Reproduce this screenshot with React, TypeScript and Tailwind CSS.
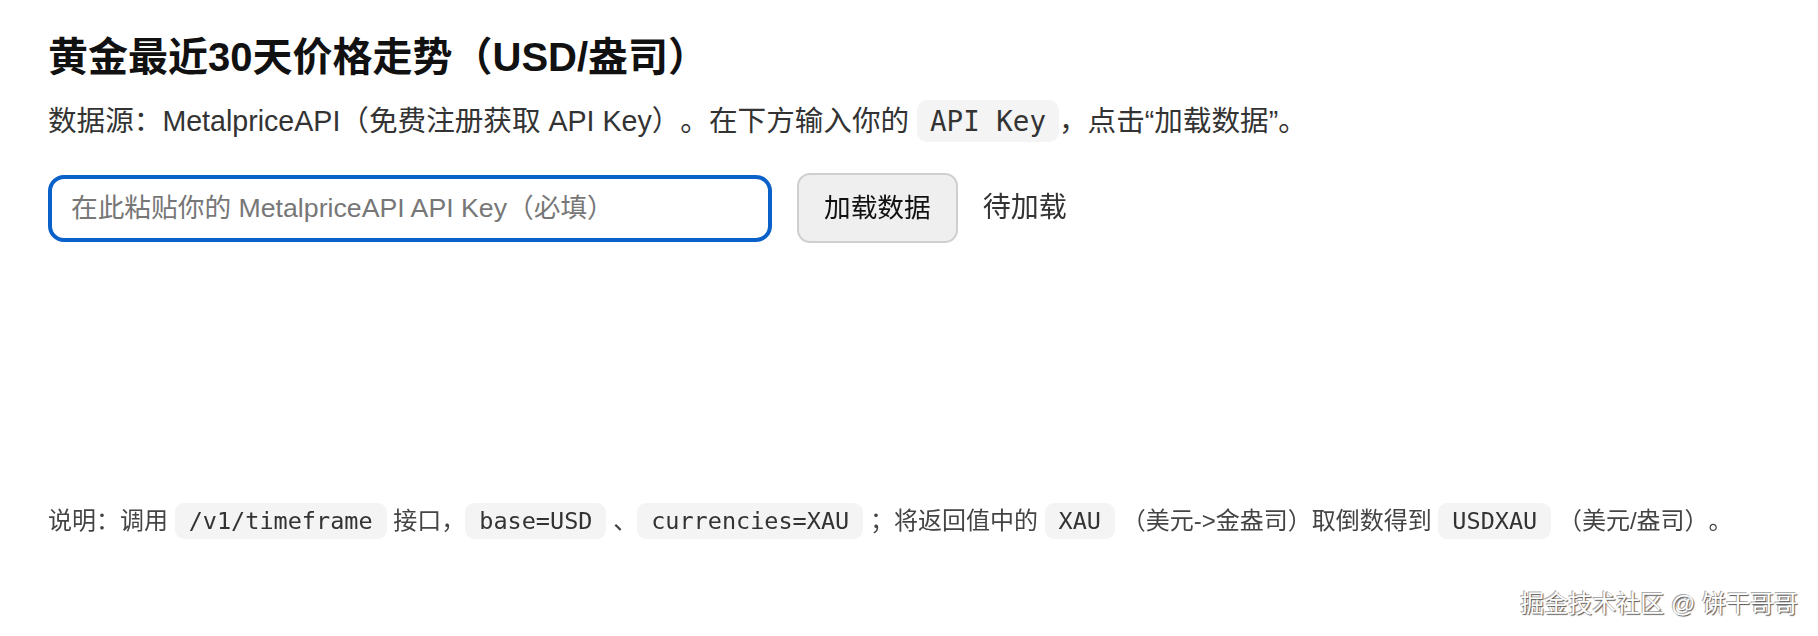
import React, { useState } from 'react'

const FONT = "font-['Liberation_Sans','Noto_Sans_CJK_SC',sans-serif]"

function Code({ children, small }: { children: React.ReactNode; small?: boolean }) {
  return (
    <code
      className={
        small
          ? "rounded-[9px] bg-[#f4f4f4] px-[14px] py-[4px] font-['DejaVu_Sans_Mono','Noto_Sans_CJK_SC',monospace] text-[23.5px] text-[#333]"
          : "rounded-[10px] bg-[#f4f4f4] px-[13px] py-[5px] font-['DejaVu_Sans_Mono','Noto_Sans_CJK_SC',monospace] text-[27.5px] text-[#333]"
      }
    >
      {children}
    </code>
  )
}

export default function App() {
  const [apiKey, setApiKey] = useState('')
  const [status] = useState('待加载')

  return (
    <div
      lang="zh-CN"
      className={`relative min-h-[636px] bg-white px-[48px] pt-[33px] [text-spacing-trim:space-all] ${FONT}`}
    >
      <h1 className="text-[40px] font-bold leading-[48px] text-[#111]">
        黄金最近30天价格走势（USD/盎司）
      </h1>
      <p className="mt-[20px] text-[28.6px] leading-[40px] text-[#333]">
        数据源：MetalpriceAPI（免费注册获取 API Key）。在下方输入你的 <Code>API Key</Code>，点击“加载数据”。
      </p>

      <div className="mt-[32px] flex items-center gap-[25px]">
        <input
          autoFocus
          value={apiKey}
          onChange={(e) => setApiKey(e.target.value)}
          placeholder="在此粘贴你的 MetalpriceAPI API Key（必填）"
          className="h-[67px] w-[724px] rounded-[16px] border-4 border-[#0a61c9] bg-white px-[19px] text-[26.7px] text-[#111] outline-none placeholder:text-[#777]"
        />
        <button className="h-[70px] rounded-[13px] border-2 border-[#cfcfcf] bg-[#efefef] px-[25px] text-[26.7px] text-[#111]">
          加载数据
        </button>
        <span className="text-[28px] text-[#333]">{status}</span>
      </div>

      {/* chart area (empty until data is loaded) */}
      <div className="mt-[24px] h-[236px]" />

      <p className="text-[24px] leading-[35px] text-[#444]">
        说明：调用 <Code small>/v1/timeframe</Code> 接口，<Code small>base=USD</Code> 、<Code small>currencies=XAU</Code> ；将返回值中的{' '}
        <Code small>XAU</Code> （美元-&gt;金盎司）取倒数得到 <Code small>USDXAU</Code> （美元/盎司）。
      </p>

      <div className="absolute right-[20px] bottom-[18px] text-[24px] leading-[28px] text-white [text-shadow:1px_1px_1px_#555,-1px_-1px_0_#aaa]">
        掘金技术社区 @ 饼干哥哥
      </div>
    </div>
  )
}
